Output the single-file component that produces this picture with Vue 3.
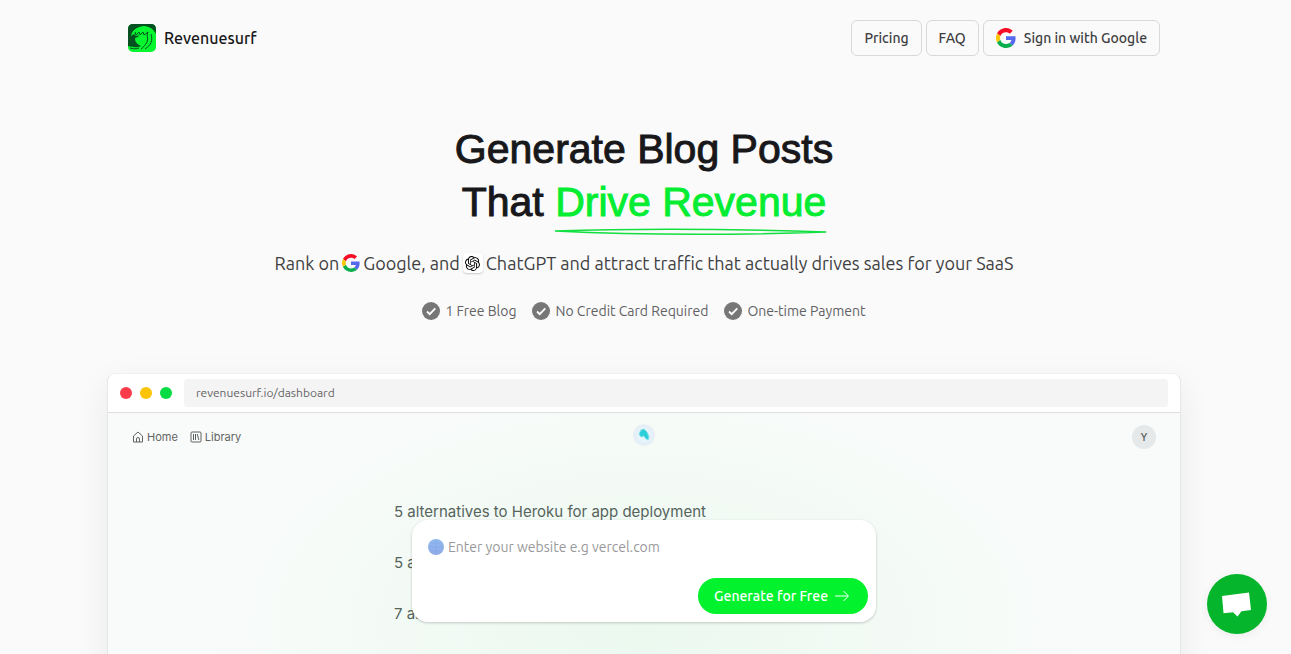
<script setup>
import { ref } from 'vue'

const website = ref('')
const perks = ['1 Free Blog', 'No Credit Card Required', 'One-time Payment']
const ideas = ['5 alternatives to Heroku for app deployment', '5 alternatives to Vercel', '7 alternatives to Vercel']
</script>

<template>
  <div class="page">
    <header class="top">
      <a class="brand" href="#">
        <svg class="brand-mark" viewBox="0 0 28 28" aria-hidden="true">
          <rect width="28" height="28" rx="5" fill="#05f52f" />
          <path d="M0 22V5Q0 0 5 0h18q5 0 5 5v5C25 4 20 2 15 2 9 3 4 6 3 12l3-2 2 2 3-1-1 2-3 1c0 4 2 6 6 8-4 2-8 1-13 0z" fill="#055020" />
          <path d="M7 8l1 3 3-3 1 3 3-3 1 3 4-3-1 3M19 11c2 6-1 10-6 14M23 10c2 7 0 11-6 15M2 24c3 1 6 1 9 0" fill="none" stroke="#055020" stroke-width="1" />
        </svg>
        <span>Revenuesurf</span>
      </a>
      <nav class="links">
        <a class="pill" href="#pricing">Pricing</a>
        <a class="pill" href="#faq">FAQ</a>
        <button class="pill" type="button">
          <svg class="google" viewBox="0 0 48 48" aria-hidden="true">
            <path fill="#f60c24" d="M24 10c3.500 0 6.700 1.200 9.200 3.600l6.900-6.900C35.900 2.700 30.500 0 24 0 14.600 0 6.500 5.400 2.600 13.200l8 6.200C12.400 13.700 17.700 10 24 10z" />
            <path fill="#5668ee" d="M47 24.600c0-1.600-.2-3.100-.4-4.600H24v9h12.900c-.6 3-2.200 5.500-4.700 7.200l7.700 6C44.400 38 47 31.800 47 24.600z" />
            <path fill="#fcc60a" d="M10.500 28.600A14.500 14.500 0 0 1 10.500 19.400l-7.900-6.200a24 24 0 0 0 0 21.600z" />
            <path fill="#08ae4b" d="M24 48c6.500 0 11.900-2.100 15.900-5.800l-7.700-6C30 37.700 27.300 38.500 24 38.500c-6.300 0-11.600-4.200-13.500-9.900l-7.900 6.200C6.500 42.600 14.600 48 24 48z" />
          </svg>
          <span>Sign in with Google</span>
        </button>
      </nav>
    </header>

    <main>
      <section class="hero">
        <h1>
          Generate Blog Posts<br />
          That <span class="accent">Drive Revenue<svg class="swoosh" viewBox="0 0 266 8" preserveAspectRatio="none" aria-hidden="true"><path d="M0 3Q120-1 266 4Q120 9 0 3z" /></svg></span>
        </h1>
        <p class="lead">
          <span>Rank on</span>
          <svg class="google-small" viewBox="0 0 48 48" aria-hidden="true">
            <path fill="#f60c24" d="M24 10c3.500 0 6.700 1.200 9.200 3.600l6.900-6.900C35.900 2.700 30.500 0 24 0 14.600 0 6.500 5.400 2.600 13.200l8 6.200C12.400 13.700 17.700 10 24 10z" />
            <path fill="#5668ee" d="M47 24.600c0-1.600-.2-3.100-.4-4.600H24v9h12.900c-.6 3-2.200 5.500-4.700 7.200l7.700 6C44.400 38 47 31.800 47 24.600z" />
            <path fill="#fcc60a" d="M10.500 28.600A14.500 14.500 0 0 1 10.500 19.400l-7.900-6.200a24 24 0 0 0 0 21.600z" />
            <path fill="#08ae4b" d="M24 48c6.500 0 11.900-2.100 15.900-5.800l-7.700-6C30 37.700 27.300 38.500 24 38.500c-6.300 0-11.600-4.200-13.500-9.900l-7.900 6.200C6.500 42.600 14.600 48 24 48z" />
          </svg>
          <span>Google, and</span>
          <span class="gpt">
            <svg viewBox="0 0 24 24" aria-hidden="true">
              <path d="M22.2819 9.8211a5.9847 5.9847 0 0 0-.5157-4.9108 6.0462 6.0462 0 0 0-6.5098-2.9A6.0651 6.0651 0 0 0 4.9807 4.1818a5.9847 5.9847 0 0 0-3.9977 2.9 6.0462 6.0462 0 0 0 .7427 7.0966 5.98 5.98 0 0 0 .511 4.9107 6.051 6.051 0 0 0 6.5146 2.9001A5.9847 5.9847 0 0 0 13.2599 24a6.0557 6.0557 0 0 0 5.7718-4.2058 5.9894 5.9894 0 0 0 3.9977-2.9001 6.0557 6.0557 0 0 0-.7475-7.0729zm-9.022 12.6081a4.4755 4.4755 0 0 1-2.8764-1.0408l.1419-.0804 4.7783-2.7582a.7948.7948 0 0 0 .3927-.6813v-6.7369l2.02 1.1686a.071.071 0 0 1 .038.052v5.5826a4.504 4.504 0 0 1-4.4945 4.4944zm-9.6607-4.1254a4.4708 4.4708 0 0 1-.5346-3.0137l.142.0852 4.783 2.7582a.7712.7712 0 0 0 .7806 0l5.8428-3.3685v2.3324a.0804.0804 0 0 1-.0332.0615L9.74 19.9502a4.4992 4.4992 0 0 1-6.1408-1.6464zM2.3408 7.8956a4.485 4.485 0 0 1 2.3655-1.9728V11.6a.7664.7664 0 0 0 .3879.6765l5.8144 3.3543-2.0201 1.1685a.0757.0757 0 0 1-.071 0l-4.8303-2.7865A4.504 4.504 0 0 1 2.3408 7.872zm16.5963 3.8558L13.1038 8.364 15.1192 7.2a.0757.0757 0 0 1 .071 0l4.8303 2.7913a4.4944 4.4944 0 0 1-.6765 8.1042v-5.6772a.79.79 0 0 0-.407-.667zm2.0107-3.0231l-.142-.0852-4.7735-2.7818a.7759.7759 0 0 0-.7854 0L9.409 9.2297V6.8974a.0662.0662 0 0 1 .0284-.0615l4.8303-2.7866a4.4992 4.4992 0 0 1 6.6802 4.66zM8.3065 12.863l-2.02-1.1638a.0804.0804 0 0 1-.038-.0567V6.0742a4.4992 4.4992 0 0 1 7.3757-3.4537l-.142.0805L8.704 5.459a.7948.7948 0 0 0-.3927.6813zm1.0976-2.3654l2.602-1.4998 2.6069 1.4998v2.9994l-2.5974 1.4997-2.6067-1.4997Z" />
            </svg>
          </span>
          <span>ChatGPT and attract traffic that actually drives sales for your SaaS</span>
        </p>
        <ul class="perks">
          <li v-for="perk in perks" :key="perk">
            <svg viewBox="0 0 18 18" aria-hidden="true">
              <circle cx="9" cy="9" r="9" fill="#777" />
              <path d="M5 9.500l2.700 2.700L13.300 6.300" fill="none" stroke="#fff" stroke-width="1.800" />
            </svg>
            <span>{{ perk }}</span>
          </li>
        </ul>
      </section>

      <section class="window">
        <div class="bar">
          <i class="dot red"></i>
          <i class="dot yellow"></i>
          <i class="dot green"></i>
          <span class="address">revenuesurf.io/dashboard</span>
        </div>
        <div class="screen">
          <div class="app-bar">
            <div class="app-nav">
              <a href="#home">
                <svg viewBox="0 0 12 12" aria-hidden="true"><path d="M1.500 5L6 1l4.500 4v6h-9zM4.500 11V8q0-1.500 1.500-1.500T7.500 8v3" /></svg>
                <span>Home</span>
              </a>
              <a href="#library">
                <svg viewBox="0 0 12 12" aria-hidden="true"><rect x="1" y="1" width="10" height="10" rx="1" /><path d="M3.500 3v6M5.500 3v6M7.200 3l1.600 6" /></svg>
                <span>Library</span>
              </a>
            </div>
            <svg class="orb" viewBox="0 0 24 24" aria-hidden="true">
              <defs>
                <radialGradient id="orb-fill"><stop offset="0.500" stop-color="#e6f4fb" /><stop offset="0.800" stop-color="#e4edf6" /><stop offset="1" stop-color="#edf3f5" stop-opacity="0" /></radialGradient>
              </defs>
              <circle cx="12" cy="12" r="12" fill="url(#orb-fill)" />
              <path d="M7 11l2-4 3-1 3 3 2 5-1 3-3-2-1-2-3 1z" fill="#2cced9" stroke="#7de0e7" stroke-width="1" stroke-linejoin="round" />
            </svg>
            <span class="avatar">Y</span>
          </div>
          <div class="ideas-area">
            <ul class="ideas">
              <li v-for="idea in ideas" :key="idea">{{ idea }}</li>
            </ul>
            <form class="prompt" @submit.prevent>
              <label class="field">
                <svg viewBox="0 0 16 16" aria-hidden="true">
                  <defs><linearGradient id="globe-fill" x2="0" y2="1"><stop stop-color="#90baf0" /><stop offset="1" stop-color="#92aae8" /></linearGradient></defs>
                  <circle cx="8" cy="8" r="8" fill="url(#globe-fill)" />
                  <path d="M1 8h14M8 1v14M3 4h10M3 12h10" fill="none" stroke="#7fa5e4" stroke-width="0.500" />
                </svg>
                <input v-model="website" type="text" aria-label="Website" placeholder="Enter your website e.g vercel.com" />
              </label>
              <button class="generate" type="submit">
                <span>Generate for Free</span>
                <svg viewBox="0 0 16 16" aria-hidden="true"><path d="M1 8h13M9.500 3l5 5-5 5" /></svg>
              </button>
            </form>
          </div>
        </div>
      </section>
    </main>

    <button class="chat" type="button" aria-label="Open chat">
      <svg viewBox="0 0 60 60" aria-hidden="true"><path d="M15 22l27-3.500 2 17.500-9.500 1.200-4 5.300-4.500-4.300-9.500 1z" fill="#fff" /></svg>
    </button>
  </div>
</template>

<style>
body {
  background: #fafafa;
}
</style>

<style scoped>
.page {
  box-sizing: border-box;
  height: 100vh;
  overflow: hidden;
  padding: 0 111px 0 108px;
  background: #fafafa;
  color: #18181b;
  font-family: Ubuntu, "Noto Sans", sans-serif;
}
a {
  color: inherit;
  text-decoration: none;
}
ul {
  list-style: none;
  margin: 0;
  padding: 0;
}
svg {
  display: block;
  flex: none;
}
.top {
  display: flex;
  align-items: center;
  justify-content: space-between;
  padding: 20px 20px 0;
}
.brand {
  display: flex;
  align-items: center;
  gap: 8px;
  font-size: 16px;
  font-weight: 500;
}
.brand-mark {
  width: 28px;
  height: 28px;
}
.links {
  display: flex;
  gap: 4px;
}
.pill {
  box-sizing: border-box;
  display: flex;
  align-items: center;
  gap: 8px;
  height: 36px;
  padding: 0 12px;
  border: 1px solid #d8d8da;
  border-radius: 6px;
  background: #fafafa;
  color: #3f3f42;
  font-family: inherit;
  font-size: 14px;
  font-weight: 500;
}
.google {
  width: 20px;
  height: 20px;
}
.hero {
  display: flex;
  flex-direction: column;
  align-items: center;
  padding-top: 67px;
}
h1 {
  margin: 0;
  font-family: "Liberation Sans", sans-serif;
  font-size: 41px;
  font-weight: 400;
  line-height: 53px;
  text-align: center;
  -webkit-text-stroke: 1px currentColor;
}
.accent {
  position: relative;
  color: #05ed32;
}
.swoosh {
  position: absolute;
  left: 0;
  bottom: -11px;
  width: 100%;
  height: 8px;
  overflow: visible;
}
.swoosh path {
  fill: none;
  stroke: #12df40;
  stroke-width: 1.500;
}
.lead {
  display: flex;
  align-items: center;
  gap: 3px;
  margin: 20px 0 0;
  color: #3f3f42;
  font-size: 18px;
  line-height: 28px;
  white-space: nowrap;
}
.google-small {
  width: 18px;
  height: 18px;
}
.gpt {
  display: grid;
  place-items: center;
  width: 20px;
  height: 20px;
  border-radius: 4px;
  background: #fff;
  box-shadow: 0 1px 2px #0003;
}
.gpt svg {
  width: 15px;
  height: 15px;
}
.perks {
  display: flex;
  gap: 16px;
  margin-top: 24px;
  color: #626265;
  font-size: 14px;
  line-height: 20px;
}
.perks li {
  display: flex;
  align-items: center;
  gap: 5px;
}
.perks svg {
  width: 18px;
  height: 18px;
}
.window {
  margin-top: 52px;
  border: 1px solid #e7e7e9;
  border-top-color: #f1f1f1;
  border-radius: 8px;
  background: #fff;
  box-shadow: 0 10px 32px #00000012;
  margin-left: -1px;
  margin-right: -1px;
}
.bar {
  display: flex;
  align-items: center;
  gap: 8px;
  padding: 5px 12px;
  border-bottom: 1px solid #dfdfe1;
}
.dot {
  width: 12px;
  height: 12px;
  border-radius: 50%;
}
.red { background: #fb3b4a; }
.yellow { background: #fdc406; }
.green { background: #05dc43; }
.address {
  flex: 1;
  margin-left: 4px;
  padding: 0 12px;
  border-radius: 4px;
  background: #f4f4f4;
  color: #646467;
  font-size: 12px;
  line-height: 28px;
}
.screen {
  height: 520px;
  background: radial-gradient(ellipse 440px 250px at 50% 210px, #ebf9ef, #f9fbfa);
  font-family: Inter, sans-serif;
}
.app-bar {
  display: grid;
  grid-template-columns: 1fr auto 1fr;
  align-items: center;
  padding: 10px 24px 0;
}
.app-nav {
  display: flex;
  gap: 12px;
  color: #5f6362;
  font-size: 11px;
}
.app-nav a {
  display: flex;
  align-items: center;
  gap: 3px;
}
.app-nav svg {
  width: 12px;
  height: 12px;
  fill: none;
  stroke: currentColor;
  stroke-width: 1;
}
.orb {
  width: 24px;
  height: 24px;
  margin-bottom: 4px;
}
.avatar {
  justify-self: end;
  width: 24px;
  border-radius: 50%;
  background: #e6e9e9;
  color: #55585a;
  font-size: 10px;
  font-weight: 500;
  line-height: 24px;
  text-align: center;
}
.ideas-area {
  position: relative;
  width: 500px;
  margin: 0 auto;
  padding-top: 48px;
}
.ideas {
  color: #56645c;
  font-size: 15px;
  line-height: 25px;
}
.ideas li {
  margin-bottom: 26px;
}
.prompt {
  position: absolute;
  top: 69px;
  left: 18px;
  right: 18px;
  box-sizing: border-box;
  display: flex;
  flex-direction: column;
  height: 102px;
  padding: 16px 8px 8px 16px;
  border-radius: 16px;
  background: #fff;
  box-shadow: 0 1px 3px #0003;
  font-family: Ubuntu, "Noto Sans", sans-serif;
}
.field {
  display: flex;
  align-items: center;
  gap: 4px;
}
.field svg {
  width: 16px;
  height: 16px;
}
.field input {
  flex: 1;
  height: 22px;
  padding: 0;
  border: 0;
  outline: 0;
  background: none;
  color: #333;
  font-family: inherit;
  font-size: 14px;
}
.field input::placeholder {
  color: #98989a;
}
.generate {
  display: flex;
  align-items: center;
  gap: 6px;
  align-self: flex-end;
  height: 36px;
  margin-top: auto;
  padding: 0 18px 0 16px;
  border: 0;
  border-radius: 18px;
  background: #02f22e;
  color: #fff;
  font-family: inherit;
  font-size: 14px;
  font-weight: 500;
}
.generate svg {
  width: 16px;
  height: 16px;
  fill: none;
  stroke: currentColor;
  stroke-width: 1;
}
.chat {
  position: fixed;
  right: 24px;
  bottom: 20px;
  width: 60px;
  height: 60px;
  padding: 0;
  border: 0;
  border-radius: 50%;
  background: #05b52b;
  box-shadow: 0 2px 10px #0000000f;
}
</style>
